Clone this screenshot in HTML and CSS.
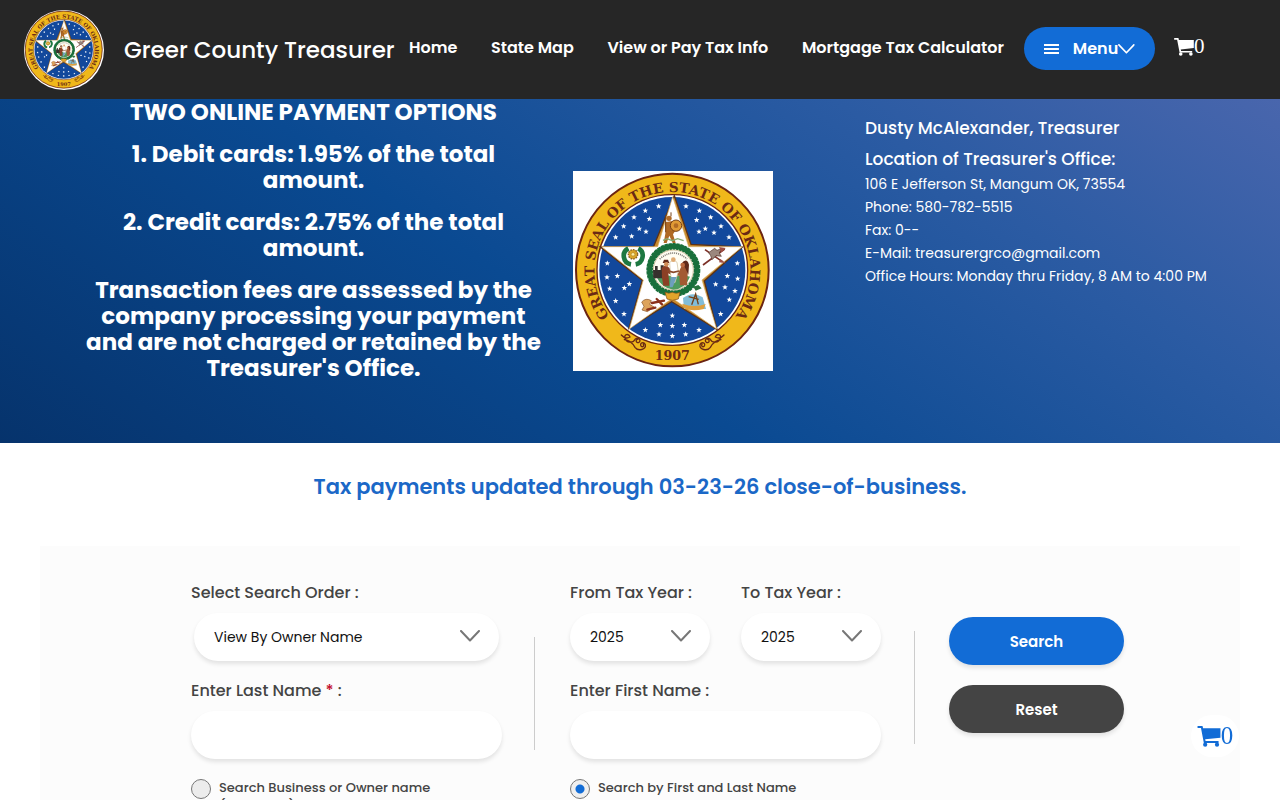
FILE: index.html
```html
<!DOCTYPE html>
<html lang="en">
<head>
  <meta charset="UTF-8">
  <meta name="viewport" content="width=device-width, initial-scale=1">
  <title>Greer County Treasurer</title>
  <link rel="stylesheet" href="styles.css">
</head>
<body>
  <!-- shared drawings -->
  <svg class="defs" aria-hidden="true">
    <defs>
      <symbol id="s" viewBox="-10 -10 20 20">
        <path fill="#fff" d="M0-10 2.4-3.2 9.5-3 3.9 1.3 5.9 8.1 0 4.1-5.9 8.1-3.9 1.3-9.5-3-2.4-3.2z"/>
      </symbol>
      <symbol id="cart" viewBox="0 0 24 22">
        <path fill="currentColor" d="M0 0h5.2l.6 2.4H24v9.8L8 14l.4 1.8H22v2H6.6L3.6 2H0z"/>
        <circle fill="currentColor" cx="8" cy="19.6" r="2.2"/>
        <circle fill="currentColor" cx="20.4" cy="19.6" r="2.2"/>
      </symbol>
      <symbol id="chevron" viewBox="0 0 20 12">
        <path fill="none" stroke="currentColor" stroke-linecap="round" stroke-linejoin="round" d="M1 1l9 9.500L19 1"/>
      </symbol>
      <path id="ring" d="M205 517.600A234 234 0 1 1 439 517.600"/>
      <symbol id="seal" viewBox="24 18 600 600">
        <circle cx="322" cy="315" r="289" fill="#f0b81a" stroke="#6b2412" stroke-width="6"/>
        <circle cx="322" cy="315" r="226" fill="#fff" stroke="#6b2412" stroke-width="4"/>
        <circle cx="322" cy="315" r="219" fill="#12489c"/>
        <path fill="#c98a2c" stroke="#5c3216" stroke-width="4" d="M328 92l50 146 154 8-114 102 38 146-136-84-128 80 40-144-126-100 160-2z"/>
        <path fill="#fff" stroke="#d7b26a" stroke-width="2" d="M323 95l48 150h161L411 345l44 147-133-92-129 92 42-147L110 245h168z"/>
        <g>
          <use href="#s" x="272" y="115" width="18" height="18"/><use href="#s" x="232" y="128" width="18" height="18"/>
          <use href="#s" x="198" y="148" width="18" height="18"/><use href="#s" x="244" y="153" width="18" height="18"/>
          <use href="#s" x="167" y="175" width="18" height="18"/><use href="#s" x="214" y="182" width="18" height="18"/>
          <use href="#s" x="143" y="208" width="18" height="18"/><use href="#s" x="191" y="205" width="18" height="18"/>
          <use href="#s" x="234" y="191" width="18" height="18"/>
          <use href="#s" x="354" y="115" width="18" height="18"/><use href="#s" x="394" y="128" width="18" height="18"/>
          <use href="#s" x="428" y="148" width="18" height="18"/><use href="#s" x="386" y="156" width="18" height="18"/>
          <use href="#s" x="459" y="175" width="18" height="18"/><use href="#s" x="412" y="182" width="18" height="18"/>
          <use href="#s" x="483" y="208" width="18" height="18"/><use href="#s" x="438" y="194" width="18" height="18"/>
          <use href="#s" x="393" y="191" width="18" height="18"/>
          <use href="#s" x="118" y="286" width="18" height="18"/><use href="#s" x="117" y="328" width="18" height="18"/>
          <use href="#s" x="148" y="324" width="18" height="18"/><use href="#s" x="184" y="348" width="18" height="18"/>
          <use href="#s" x="125" y="362" width="18" height="18"/><use href="#s" x="169" y="360" width="18" height="18"/>
          <use href="#s" x="143" y="399" width="18" height="18"/><use href="#s" x="168" y="438" width="18" height="18"/>
          <use href="#s" x="508" y="286" width="18" height="18"/><use href="#s" x="478" y="324" width="18" height="18"/>
          <use href="#s" x="509" y="332" width="18" height="18"/><use href="#s" x="443" y="349" width="18" height="18"/>
          <use href="#s" x="471" y="358" width="18" height="18"/><use href="#s" x="501" y="369" width="18" height="18"/>
          <use href="#s" x="484" y="395" width="18" height="18"/><use href="#s" x="458" y="438" width="18" height="18"/>
          <use href="#s" x="313" y="443" width="18" height="18"/><use href="#s" x="277" y="471" width="18" height="18"/>
          <use href="#s" x="313" y="474" width="18" height="18"/><use href="#s" x="349" y="471" width="18" height="18"/>
          <use href="#s" x="232" y="486" width="18" height="18"/><use href="#s" x="273" y="499" width="18" height="18"/>
          <use href="#s" x="313" y="504" width="18" height="18"/><use href="#s" x="353" y="499" width="18" height="18"/>
          <use href="#s" x="393" y="486" width="18" height="18"/>
        </g>
        <!-- warrior with shield, top ray -->
        <g fill="#b06a25">
          <circle cx="312" cy="160" r="8"/><path d="M300 172l22-4 10 28-8 12 8 26h-9l-10-22-8 22h-9l6-34z"/>
          <circle cx="333" cy="182" r="17" fill="#e09a35" stroke="#744017" stroke-width="3"/><circle cx="333" cy="182" r="7"/>
          <path fill="none" stroke="#744017" stroke-width="3" d="M302 150v52M318 142v12"/>
        </g>
        <path fill="none" stroke="#86ab73" stroke-width="4" d="M294 226l12-5 16 6 16-6 18 6"/>
        <!-- left ray wreath -->
        <path fill="none" stroke="#1d7841" stroke-width="14" d="M190 250c-22 12-16 44 8 48M220 250c22 12 14 44-8 48"/>
        <circle cx="204" cy="268" r="14" fill="#d9a427" stroke="#8a6220" stroke-width="4" stroke-dasharray="5 3"/>
        <circle cx="204" cy="268" r="5" fill="#fff0a0" stroke="#8a6220"/>
        <!-- crossed arrows and pipe -->
        <path fill="none" stroke="#7c3027" stroke-width="5" d="M414 300l65-48M420 254l52 36"/>
        <path fill="#9b877e" stroke="#54352b" stroke-width="2" d="M431 263l18-13 7 6 13-5-6 13 6 10-16-2-12 12-4-12z"/>
        <path fill="#a15044" d="M462 246l20 3-13 13zM466 282l17 13-21-3z"/>
        <!-- hatchet and canoe -->
        <path fill="#dda35c" stroke="#875126" stroke-width="2" d="M230 411q12-14 29-4l-5 11 13 8-20 14-16-5 6-11z"/>
        <path fill="none" stroke="#8b321c" stroke-width="7" stroke-linecap="round" d="M261 414l36-7M275 402l16 16M247 434l24-6"/>
        <path fill="#81bdd8" d="M354 399q28-22 59-2l10 35h-66z"/>
        <path fill="#df9f3c" d="M351 416q38 13 71 1l-6 15q-34 8-58-2z"/>
        <path fill="none" stroke="#744017" stroke-width="4" d="M380 419l12-32 8 31M371 395l30 8"/>
        <!-- center scene -->
        <circle cx="325" cy="315" r="71" fill="none" stroke="#196f3b" stroke-width="20" stroke-dasharray="9 2"/>
        <circle cx="325" cy="315" r="71" fill="none" stroke="#196f3b" stroke-width="15"/>
        <circle cx="325" cy="315" r="60" fill="#fffdf3" stroke="#b9a679" stroke-width="2"/>
        <path fill="#4e9b5d" d="M275 337q28-12 51-1 24-9 49-1-14 36-50 39-35-4-50-37z"/>
        <path fill="#37312d" d="M264 315h23v-14h9v39h-31zM270 303h8v12h-8z"/>
        <path fill="#8b3f25" d="M290 309q12-14 23 0l11 14-4 8-10-6 3 37h-18l-4-24z"/>
        <path fill="#a35a32" d="M340 323l8-16q15-13 21 4l-3 50h-21l-2-29-12 1-5-7z"/>
        <path fill="#602a1a" d="M349 296q16-20 23 3l-2 30-11-24zM293 294h20l-4-10h-12z"/>
        <circle cx="304" cy="298" r="7" fill="#d28d56"/><circle cx="353" cy="300" r="7" fill="#bb693e"/>
        <path fill="#fff" stroke="#c8b992" stroke-width="2" d="M314 292q12-10 22 0l4 28-10 33h-9l-5-31z"/>
        <path fill="#6d9fbd" d="M317 336h18l-12 31h-9z"/>
        <circle cx="325" cy="284" r="7" fill="#dfaa72"/>
        <path fill="none" stroke="#8b4a2c" stroke-width="5" d="M307 317l18 5 17-4"/>
        <path fill="none" stroke="#7b7770" stroke-width="5" stroke-dasharray="3 3" d="M284 282q42-36 82 0"/>
        <path fill="#e2a42b" stroke="#84501b" stroke-width="2" d="M300 382q12 5 22 0 12 6 23 0l-5 20q-18 8-34 0z"/>
        <path fill="#28743c" d="M385 365l15-5 10 10-18 7z"/>
        <g fill="none" stroke="#6b2a14" stroke-width="4" stroke-linecap="round">
          <path id="scroll" d="M169 510q12 14 26 6c-4-12-19-8-15 3 4 15 24 17 31 3 9-7 19 3 11 10-9 4-12-8-3-10M178 524q20 2 32 23c9 13 34 7 31-8-5-10-18-5-13 4 5 5 10 0 7-5"/>
          <use href="#scroll" transform="matrix(-1 0 0 1 646 0)"/>
        </g>
        <g class="seal-text" fill="#6b2a14">
          <text font-size="41" text-anchor="middle"><textPath href="#ring" startOffset="50%">GREAT SEAL OF THE STATE OF OKLAHOMA</textPath></text>
          <text x="322" y="585" font-size="38" text-anchor="middle">1907</text>
        </g>
      </symbol>
    </defs>
  </svg>

  <header class="topbar">
    <a class="brand" href="#">
      <svg class="brand-logo" aria-hidden="true"><use href="#seal"/></svg>
      <span>Greer County Treasurer</span>
    </a>
    <nav class="nav">
      <a href="#">Home</a>
      <a href="#">State Map</a>
      <a href="#">View or Pay Tax Info</a>
      <a href="#">Mortgage Tax Calculator</a>
    </nav>
    <button class="menu-btn" type="button">
      <span class="bars"></span>
      <span>Menu</span>
      <svg class="menu-arrow" aria-hidden="true"><use href="#chevron"/></svg>
    </button>
    <a class="cart" href="#"><svg aria-hidden="true"><use href="#cart"/></svg>0</a>
  </header>

  <section class="hero">
    <div class="options">
      <h3>TWO ONLINE PAYMENT OPTIONS</h3>
      <h3>1. Debit cards: 1.95% of the total amount.</h3>
      <h3>2. Credit cards: 2.75% of the total amount.</h3>
      <h3>Transaction fees are assessed by the company processing your payment and are not charged or retained by the Treasurer's Office.</h3>
    </div>
    <div class="seal-box">
      <svg class="seal" role="img"><use href="#seal"/></svg>
    </div>
    <div class="office">
      <h4>Dusty McAlexander, Treasurer</h4>
      <h4>Location of Treasurer's Office:</h4>
      <p>106 E Jefferson St, Mangum OK, 73554</p>
      <p>Phone: 580-782-5515</p>
      <p>Fax: 0--</p>
      <p>E-Mail: treasurergrco@gmail.com</p>
      <p>Office Hours: Monday thru Friday, 8 AM to 4:00 PM</p>
    </div>
  </section>

  <h2 class="updated">Tax payments updated through 03-23-26 close-of-business.</h2>

  <form class="search">
    <div class="col">
      <label for="order">Select Search Order :</label>
      <div class="select-box order-box">
        <select id="order"><option>View By Owner Name</option></select>
        <svg aria-hidden="true"><use href="#chevron"/></svg>
      </div>
      <label for="last">Enter Last Name <span class="req">*</span> :</label>
      <input class="field" id="last" type="text">
      <div class="choice">
        <input type="radio" name="mode" id="business">
        <label for="business">Search Business or Owner name (company)</label>
      </div>
    </div>
    <div class="divider"></div>
    <div class="col">
      <div class="years">
        <div>
          <label for="from">From Tax Year :</label>
          <div class="select-box">
            <select id="from"><option>2025</option></select>
            <svg aria-hidden="true"><use href="#chevron"/></svg>
          </div>
        </div>
        <div>
          <label for="to">To Tax Year :</label>
          <div class="select-box">
            <select id="to"><option>2025</option></select>
            <svg aria-hidden="true"><use href="#chevron"/></svg>
          </div>
        </div>
      </div>
      <label for="first">Enter First Name :</label>
      <input class="field" id="first" type="text">
      <div class="choice">
        <input type="radio" name="mode" id="person" checked>
        <label for="person">Search by First and Last Name</label>
      </div>
    </div>
    <div class="divider divider-right"></div>
    <div class="actions">
      <button class="btn" type="submit">Search</button>
      <button class="btn btn-dark" type="reset">Reset</button>
    </div>
  </form>

  <a class="float-cart" href="#"><svg aria-hidden="true"><use href="#cart"/></svg>0</a>
</body>
</html>
```

FILE: styles.css
```css
* {
  box-sizing: border-box;
}
body {
  margin: 0;
  font-family: Poppins, Inter, sans-serif;
  color: #444;
  background: #fff;
}
a {
  color: inherit;
  text-decoration: none;
}
h2, h3, h4, p {
  margin: 0;
}
.defs {
  position: absolute;
  width: 0;
  height: 0;
}
.seal-text {
  font-family: "DejaVu Serif", serif;
  font-weight: bold;
}

/* header */
.topbar {
  display: flex;
  align-items: center;
  height: 99px;
  padding-left: 24px;
  background: #262626;
  color: #fff;
  white-space: nowrap;
}
.brand {
  display: flex;
  align-items: center;
  gap: 20px;
  width: 385px;
  font-size: 23px;
  font-weight: 500;
}
.brand-logo {
  width: 80px;
  height: 80px;
  border-radius: 50%;
  background: #fff;
}
.nav {
  display: flex;
  justify-content: space-between;
  width: 595px;
  margin-bottom: 4px;
  font-size: 16px;
  font-weight: 600;
}
.menu-btn {
  display: flex;
  align-items: center;
  width: 131px;
  height: 43px;
  margin: 0 19px 2px 20px;
  padding: 0 20px;
  border: none;
  border-radius: 22px;
  background: #126cd6;
  color: #fff;
  font: 600 16px Poppins, Inter, sans-serif;
}
.bars {
  width: 15px;
  height: 10px;
  margin-right: 14px;
  border-top: 2px solid #fff;
  border-bottom: 2px solid #fff;
  background: linear-gradient(#fff, #fff) center / 100% 2px no-repeat;
}
.menu-arrow {
  width: 17px;
  height: 10px;
  stroke-width: 2;
}
.cart {
  display: flex;
  align-items: center;
  margin-bottom: 6px;
  font: 21px "Liberation Serif", serif;
}
.cart svg {
  width: 20px;
  height: 18px;
}

/* banner */
.hero {
  display: grid;
  grid-template-columns: 1fr 200px 457px;
  column-gap: 10px;
  height: 344px;
  padding: 0 40px 0 64px;
  background: linear-gradient(34deg, #06336c 0%, #0a4a92 42%, #2b5ba3 75%, #4966ad 100%);
  color: #fff;
}
.options {
  padding: 0 20px;
  text-align: center;
}
.options h3 {
  margin-bottom: 16px;
  font-size: 23px;
  font-weight: 700;
  line-height: 26px;
}
.seal-box {
  padding-top: 72px;
}
.seal {
  display: block;
  width: 200px;
  height: 200px;
  background: #fff;
}
.office {
  padding: 16px 0 0 82px;
  white-space: nowrap;
}
.office h4 {
  font-size: 17px;
  font-weight: 500;
  line-height: 27px;
}
.office h4 + h4 {
  margin-top: 4px;
}
.office p {
  font-size: 14px;
  line-height: 23px;
}

.updated {
  margin: 32px 0 47px;
  color: #1b68c7;
  font-size: 21px;
  font-weight: 600;
  line-height: 24px;
  text-align: center;
}

/* search form */
.search {
  display: flex;
  max-width: 1200px;
  margin: 0 auto;
  padding: 35px 0 40px 151px;
  background: #fcfcfc;
}
.col {
  width: 311px;
}
.search label {
  display: block;
  margin-bottom: 8px;
  font-size: 16px;
  font-weight: 500;
  line-height: 24px;
}
.req {
  color: #c4122f;
}
.select-box {
  position: relative;
  margin-bottom: 18px;
}
.order-box {
  margin-left: 3px;
  margin-right: 3px;
}
.select-box select,
.field {
  display: block;
  width: 100%;
  height: 48px;
  padding: 0 20px;
  border: none;
  border-radius: 24px;
  background: #fff;
  box-shadow: 0 3px 4px rgba(0, 0, 0, 0.1);
  color: #111;
  font: 14px Poppins, Inter, sans-serif;
  appearance: none;
}
.select-box svg {
  position: absolute;
  top: 17px;
  right: 19px;
  width: 20px;
  height: 12px;
  color: #777;
  stroke-width: 2;
  pointer-events: none;
}
.years {
  display: flex;
  gap: 31px;
}
.years > div {
  flex: 1;
}
.choice {
  display: flex;
  gap: 8px;
  margin-top: 20px;
}
.choice input {
  flex: none;
  width: 20px;
  height: 20px;
  margin: 0;
  border: 1px solid #777;
  border-radius: 50%;
  background: #ececec;
  appearance: none;
}
.choice input:checked {
  background: radial-gradient(circle, #126cd6 4px, #efefef 5px);
}
.search .choice label {
  width: 240px;
  font-size: 13px;
  font-weight: 500;
  line-height: 18px;
}
.divider {
  width: 1px;
  height: 113px;
  margin: 56px 35px 0 32px;
  background: #ccc;
}
.divider-right {
  margin: 50px 34px 0 33px;
}
.actions {
  display: flex;
  flex-direction: column;
  gap: 20px;
  width: 175px;
  padding-top: 36px;
}
.btn {
  height: 48px;
  border: none;
  border-radius: 24px;
  background: #126cd6;
  box-shadow: 0 3px 4px rgba(0, 0, 0, 0.1);
  color: #fff;
  font: 600 15px Poppins, Inter, sans-serif;
}
.btn-dark {
  background: #444;
}

/* cart that stays in the corner */
.float-cart {
  position: fixed;
  right: 41px;
  bottom: 43px;
  display: flex;
  align-items: center;
  justify-content: center;
  width: 48px;
  height: 42px;
  border-radius: 21px;
  background: #fff;
  color: #126cd6;
  font: 25px "Liberation Serif", serif;
}
.float-cart svg {
  width: 24px;
  height: 21px;
}
```
